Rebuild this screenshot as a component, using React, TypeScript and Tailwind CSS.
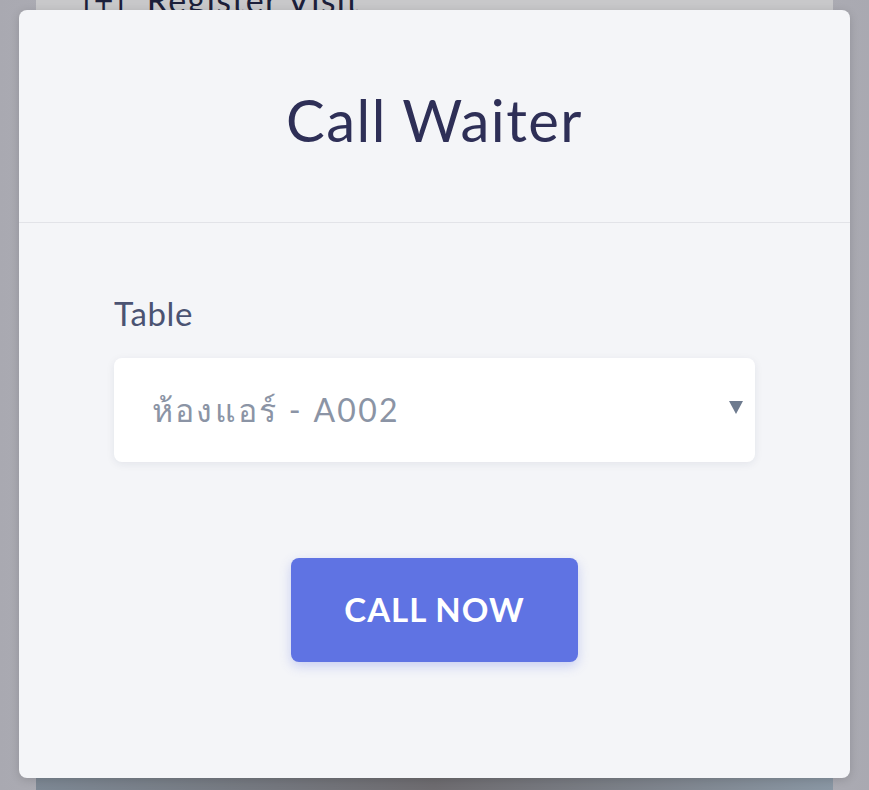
export default function App() {
  return (
    <div
      className="relative w-full h-[790px] overflow-hidden bg-gradient-to-r from-[#a9a9b1] via-[#bdbdc3] to-[#a9a9b1]"
      style={{ fontFamily: '"Lato", "Noto Sans", sans-serif' }}
    >
      {/* Page behind the dialog (dimmed) */}
      <div className="mx-[36px] h-full flex flex-col bg-[#c8c8ca]">
        <div className="h-[20px] overflow-visible">
          <p className="pl-[46px] -mt-[20px] text-[34px] leading-[40px] text-[#1c1f3a] tracking-[0.04em]">
            [+]&nbsp; Register Visit
          </p>
        </div>
        <div className="flex-1" />
        <div className="h-[40px] bg-gradient-to-r from-[#7d8894] via-[#6e6c70] to-[#8a97a4]" />
      </div>

      {/* Dialog */}
      <div className="absolute left-[19px] top-[10px] w-[831px] h-[768px] rounded-[8px] bg-[#f4f5f8] shadow-[0_2px_10px_rgba(0,0,0,0.15)] flex flex-col">
        <div className="h-[213px] flex items-center justify-center border-b border-[#e2e3e8]">
          <h1 className="text-[58px] leading-none text-[#2e2f57] tracking-[0.025em] pt-[8px]">Call Waiter</h1>
        </div>

        <div className="px-[95px] pt-[74px]">
          <label className="block text-[33px] leading-none text-[#4b5372] tracking-[0.02em] mb-[28px]">Table</label>
          <div className="h-[104px] bg-white rounded-[8px] shadow-[0_2px_8px_rgba(30,40,80,0.08)] flex items-center justify-between pl-[38px] pr-[12px]">
            <span className="text-[32px] text-[#8b94a5] tracking-[0.07em]">ห้องแอร์ - A002</span>
            <svg width="14" height="13" viewBox="0 0 14 13" className="mt-[-6px]">
              <path d="M0 0 L14 0 L7 13 Z" fill="#6e7b8f" />
            </svg>
          </div>

          <div className="flex justify-center pt-[96px]">
            <button className="w-[287px] h-[104px] rounded-[8px] bg-[#5f73e3] text-white text-[33px] font-bold tracking-[0.03em] shadow-[0_4px_12px_rgba(95,115,227,0.3)]">
              CALL NOW
            </button>
          </div>
        </div>
      </div>
    </div>
  );
}
